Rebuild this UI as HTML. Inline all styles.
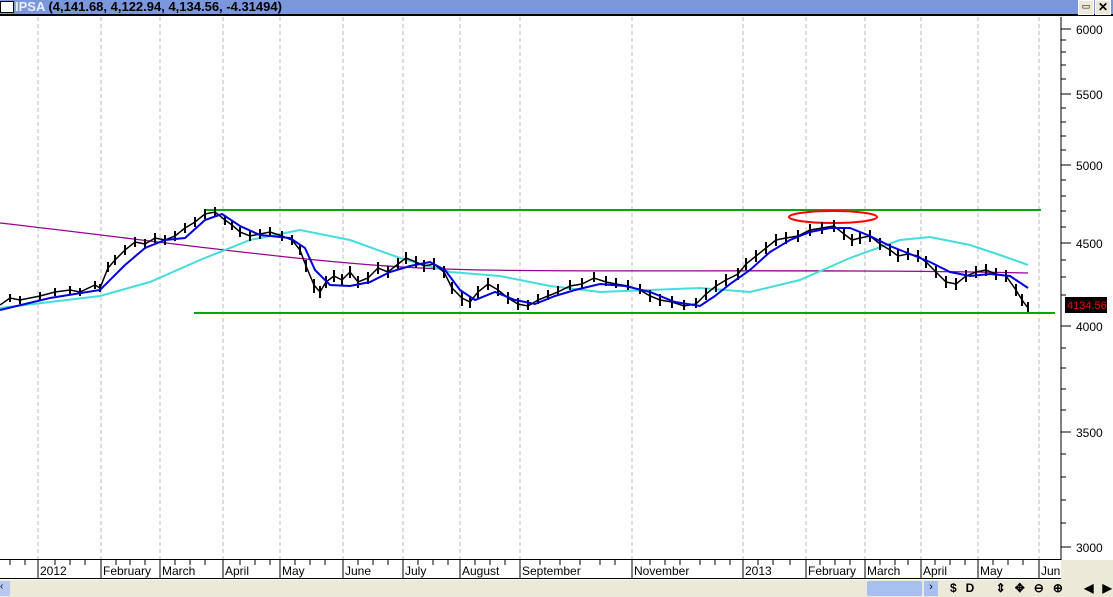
<!DOCTYPE html><html><head><style>
body{margin:0;width:1113px;height:597px;overflow:hidden;background:#fff;font-family:"Liberation Sans",sans-serif;position:relative}
.t{position:absolute;left:0;top:0;width:1113px;height:14px;background:#7b97dc;border-bottom:2px solid #000}
.t b{position:absolute;left:15px;top:0;font-size:13px;color:#000;line-height:14px;font-weight:bold}
.t b span{color:#e8eeff}
.bb{position:absolute;left:0;top:580px;width:1113px;height:17px;background:#ece9d8}
</style></head><body>
<div class="t"><div style="position:absolute;left:0;top:1px;width:12px;height:10px;background:#fff;border:1px solid #000"></div><b><span>IPSA</span> (4,141.68, 4,122.94, 4,134.56, -4.31494)</b>
<div style="position:absolute;left:1078px;top:0;width:14px;height:13px;background:#ece9d8;border:1px solid #fff;font-size:9px;text-align:center">▭</div>
<div style="position:absolute;left:1095px;top:0;width:14px;height:13px;background:#ece9d8;border:1px solid #fff;font-size:12px;font-weight:bold;text-align:center;line-height:13px">✕</div></div>
<svg width="1113" height="580" style="position:absolute;left:0;top:0">
<g stroke="#bbb" stroke-dasharray="4,3" stroke-width="1">
<path d="M38 17V559M101 17V559M160 17V559M223 17V559M280 17V559M343 17V559M403 17V559M460 17V559M520 17V559M632 17V559M743 17V559M806 17V559M865 17V559M921 17V559M978 17V559M1039 17V559"/></g>
<path d="M1061 17V560M0 559.5H1061M0 578.5H1061" stroke="#000" fill="none"/>
<g stroke="#000"><path d="M1061 29h10M1061 94h10M1061 165h10M1061 243h10M1061 326h10M1061 432h10M1061 547h10M1061 40h5M1061 52h5M1061 65h5M1061 79h5M1061 108h5M1061 122h5M1061 136h5M1061 150h5M1061 180h5M1061 196h5M1061 211h5M1061 227h5M1061 260h5M1061 277h5M1061 295h5M1061 348h5M1061 368h5M1061 389h5M1061 410h5M1061 454h5M1061 477h5M1061 500h5M1061 523h5"/>
<path d="M10 559v6M25 559v6M38 559v19M55 559v6M70 559v6M85 559v6M101 559v19M116 559v6M130 559v6M145 559v6M160 559v19M175 559v6M190 559v6M205 559v6M223 559v19M240 559v6M255 559v6M270 559v6M280 559v19M295 559v6M310 559v6M325 559v6M343 559v19M358 559v6M373 559v6M388 559v6M403 559v19M418 559v6M433 559v6M448 559v6M460 559v19M475 559v6M490 559v6M505 559v6M520 559v19M540 559v6M560 559v6M580 559v6M600 559v6M615 559v6M632 559v19M650 559v6M665 559v6M680 559v6M700 559v6M715 559v6M730 559v6M743 559v19M758 559v6M773 559v6M790 559v6M806 559v19M820 559v6M835 559v6M850 559v6M865 559v19M880 559v6M895 559v6M908 559v6M921 559v19M935 559v6M950 559v6M965 559v6M978 559v19M993 559v6M1008 559v6M1023 559v6M1039 559v19"/></g>
<path d="M204 210H1041M194 313H1055" stroke="#0a0" stroke-width="2"/>
<ellipse cx="833" cy="217" rx="44" ry="6" fill="none" stroke="red" stroke-width="2"/>
<path d="M0 223C150 240 300 262 420 268S800 268 1028 273" stroke="#909" fill="none" stroke-width="1.3"/>
<polyline fill="none" stroke="#4dd" stroke-width="2" points="0,308 100,296 150,282 200,260 250,240 300,230 350,240 400,258 450,272 500,276 550,286 600,292 650,290 700,288 750,292 800,280 850,258 900,240 930,237 970,245 1000,255 1028,265"/>
<polyline fill="none" stroke="#000" stroke-width="1.5" points="0,305 10,298 20,300 40,296 55,292 70,290 80,292 95,285 100,288 108,268 115,260 125,250 135,242 145,244 155,238 165,240 175,236 185,228 195,222 205,214 215,212 225,220 232,225 240,232 250,236 260,234 270,232 282,236 292,240 300,250 306,266 314,285 320,292 326,282 334,276 342,280 350,272 358,282 368,278 378,268 388,272 398,264 406,258 416,262 424,266 434,264 444,272 452,288 462,298 470,302 478,292 488,284 498,290 508,298 518,304 528,306 538,300 548,296 558,292 570,286 582,284 594,278 606,282 616,284 628,286 640,290 650,296 660,300 672,302 684,306 696,304 706,294 716,286 726,280 738,274 746,264 756,256 766,248 776,240 786,238 798,236 810,230 822,228 834,226 844,234 852,240 860,238 870,236 880,244 890,250 898,256 908,254 918,256 926,262 936,272 946,282 956,284 966,276 976,272 986,270 996,274 1006,276 1016,290 1022,300 1028,308"/>
<path fill="none" stroke="#000" stroke-width="2" d="M10 294v8M20 296v8M40 292v8M55 288v8M70 286v8M80 288v8M95 281v8M100 284v8M108 262v10M115 255v10M125 245v10M135 237v10M145 239v10M155 233v10M165 235v10M175 231v10M185 223v10M195 217v10M205 209v10M215 207v10M225 215v10M232 220v10M240 227v10M250 231v10M260 229v10M270 227v10M282 231v10M292 235v10M300 245v10M306 260v12M314 279v14M320 286v12M326 276v12M334 270v12M342 274v12M350 266v12M358 276v12M368 272v12M378 262v12M388 266v12M398 258v12M406 252v12M416 256v12M424 260v12M434 258v12M444 266v12M452 282v12M462 292v14M470 296v12M478 286v12M488 278v12M498 284v12M508 292v12M518 298v12M528 300v10M538 294v10M548 290v10M558 286v10M570 280v10M582 278v10M594 272v10M606 276v10M616 278v10M628 280v10M640 284v10M650 290v12M660 294v12M672 296v12M684 300v10M696 298v10M706 288v12M716 280v12M726 274v12M738 268v12M746 258v12M756 250v12M766 242v12M776 234v12M786 232v12M798 230v12M810 224v12M822 222v12M834 220v12M844 228v12M852 234v12M860 232v12M870 230v12M880 238v12M890 244v12M898 250v12M908 248v12M918 250v12M926 256v12M936 266v12M946 276v12M956 278v12M966 270v12M976 266v12M986 264v12M996 268v12M1006 270v12M1016 284v12M1022 294v12M1028 302v10"/>
<polyline fill="none" stroke="#00d" stroke-width="2" points="0,310 50,298 100,290 125,265 145,248 165,240 185,238 205,220 222,214 240,226 260,235 290,238 305,248 315,270 330,285 350,286 370,282 390,272 410,266 430,262 445,270 460,290 475,300 495,292 515,300 535,304 555,296 575,290 600,284 625,286 650,292 675,302 700,306 715,296 730,284 750,270 770,252 790,240 810,232 830,228 850,228 870,236 890,246 910,254 930,262 950,272 970,276 990,274 1010,276 1028,288"/>
<g font-size="12" font-family="Liberation Sans,sans-serif" fill="#000">
<text x="1076" y="34">6000</text><text x="1076" y="99">5500</text><text x="1076" y="170">5000</text><text x="1076" y="248">4500</text><text x="1076" y="331">4000</text><text x="1076" y="437">3500</text><text x="1076" y="552">3000</text>
<text x="40" y="575">2012</text><text x="103" y="575">February</text><text x="162" y="575">March</text><text x="225" y="575">April</text><text x="282" y="575">May</text><text x="345" y="575">June</text><text x="405" y="575">July</text><text x="462" y="575">August</text><text x="522" y="575">September</text><text x="634" y="575">November</text><text x="745" y="575">2013</text><text x="808" y="575">February</text><text x="867" y="575">March</text><text x="923" y="575">April</text><text x="980" y="575">May</text><text x="1041" y="575">Jun</text></g>
<rect x="1065" y="297" width="42" height="16" fill="#000"/><text x="1067" y="309" font-size="11" fill="#f00" font-family="Liberation Sans,sans-serif">4134.56</text>
</svg>
<div style="position:absolute;left:1061px;top:560px;width:52px;height:20px;background:#ece9d8"></div>
<div class="bb">
<div style="position:absolute;left:0;top:1px;width:10px;height:15px;background:#b8c8f0;font-size:10px">‹</div>
<div style="position:absolute;left:867px;top:1px;width:55px;height:15px;background:#a8c0f0;border-radius:2px"></div>
<div style="position:absolute;left:924px;top:1px;width:14px;height:15px;background:#a8c0f0;font-size:11px;text-align:center">›</div>
<div style="position:absolute;left:950px;top:1px;font-size:12px;font-weight:bold;letter-spacing:9px;white-space:nowrap">$D&nbsp;⇕✥⊖⊕&nbsp;◀▶▤</div>
</div>
</body></html>
